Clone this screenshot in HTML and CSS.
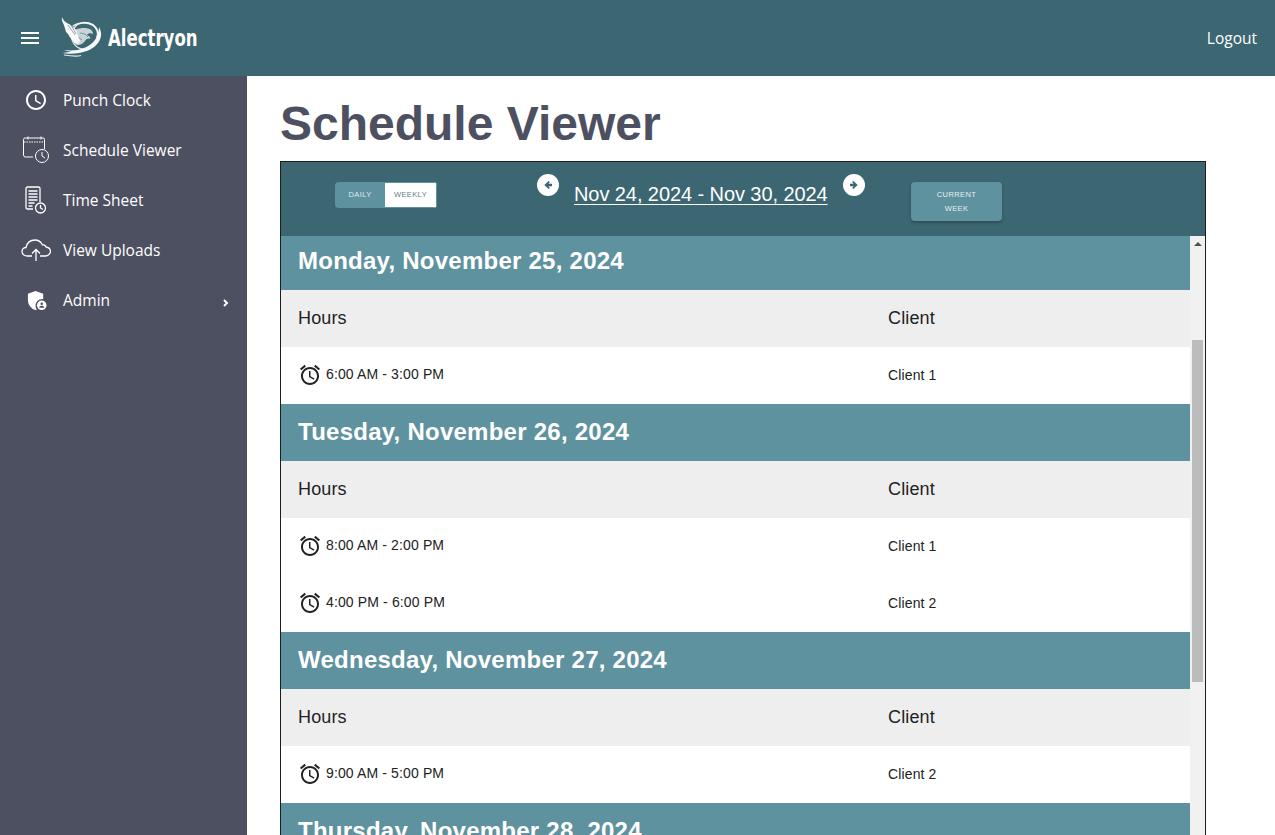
FILE: index.html
```html
<!DOCTYPE html>
<html lang="en">
<head>
<meta charset="utf-8">
<title>Schedule Viewer</title>
<link rel="stylesheet" href="styles.css">
</head>
<body>
<header class="topbar">
  <svg class="menu-icon" viewBox="0 0 24 24"><path d="M3 18h18v-2H3v2zm0-5h18v-2H3v2zm0-7v2h18V6H3z"/></svg>
  <div class="logo">
    <svg class="logo-mark" viewBox="0 0 44 42">
      <circle class="logo-line thin" cx="25" cy="19" r="13.500"/>
      <path class="logo-line" d="M13 9c6-4 14-4 20-1 4 3 6 8 4 13"/>
      <path class="logo-soft" d="M24 11c5 0 9 2 9 6-2-1-5-1-6 1 2 1 4 2 3 4-2-1-4 0-5 2-3 4-7 5-10 3-3-3-4-9-2-13 2-2 7-3 11-3z"/>
      <path class="logo-cut" d="M20 16l5 1 3 3M18 20l4 3"/>
      <path class="logo-fill" d="M2 0c1 3 3 5 5 6 4 2 7 4 9 7l2 6 2 5-2 3c-5-2-8-6-10-10l-2-2C4 6 1 4 2 0z"/>
      <path class="logo-cut" d="M8 8l7 10M11 8l5 9"/>
      <path class="logo-fill" d="M39 10c3 5 3 11-1 16-5 6-12 9-19 10-6 1-12 1-17 0 4-.5 7-1 9-1.500-3-.2-5-.8-7-1.500 7 1 14 .5 20-2 8-3 15-10 15-21z"/>
      <path class="logo-line thin" d="M4 38c6 1 12 2 17 .5"/>
    </svg>
    <span class="logo-text">Alectryon</span>
  </div>
  <a class="logout">Logout</a>
</header>
<div class="shell">
  <nav class="sidebar">
    <a class="nav-item">
      <span class="nav-icon"><svg width="24" height="24" viewBox="0 0 24 24"><path class="fill" d="M11.990 2C6.470 2 2 6.480 2 12s4.470 10 9.990 10C17.520 22 22 17.520 22 12S17.520 2 11.990 2zM12 20c-4.420 0-8-3.580-8-8s3.580-8 8-8 8 3.580 8 8-3.580 8-8 8zm.5-13H11v6l5.250 3.150.75-1.230-4.500-2.670z"/></svg></span>
      <span>Punch Clock</span>
    </a>
    <a class="nav-item">
      <span class="nav-icon"><svg width="28" height="28" viewBox="0 0 28 28"><g class="stroke"><path d="M11 21H3.500a2 2 0 0 1-2-2V3.500a1.500 1.500 0 0 1 1.500-1.500h18a1.500 1.500 0 0 1 1.500 1.500V13"/><path stroke-dasharray="1.500 1" d="M2 6h21"/><path d="M6 0.500v3M19 0.500v3"/><circle cx="20" cy="20" r="6.500"/><path d="M20 16v4l3 2"/></g></svg></span>
      <span>Schedule Viewer</span>
    </a>
    <a class="nav-item">
      <span class="nav-icon"><svg width="26" height="28" viewBox="0 0 26 28"><g class="stroke heavy"><path d="M10 23H4.500a1.500 1.500 0 0 1-1.500-1.500V2.500A1.500 1.500 0 0 1 4.500 1h11A1.500 1.500 0 0 1 17 2.500V16"/><path d="M5.500 5h9M5.500 8h9M5.500 11h9M5.500 14h9M5.500 17h6M5.500 20h4"/><circle cx="17.500" cy="22" r="5"/><path d="M17.500 19v3l2.500 1.500"/></g></svg></span>
      <span>Time Sheet</span>
    </a>
    <a class="nav-item">
      <span class="nav-icon"><svg width="30" height="22" viewBox="0 0 30 22"><g class="stroke heavy"><path d="M11 17H6.500C3.500 17 1 15 1 12.500S3 8.500 5 8.500C6 4 9.500 1 14 1c3.500 0 6 2 7.500 5 1-.5 3 0 3.500 2 2.500.5 4.500 2.500 4.500 4.500S27 17 24.500 17H19"/><path d="M15 22V11M11 14.500l4-4 4 4"/></g></svg></span>
      <span>View Uploads</span>
    </a>
    <a class="nav-item">
      <span class="nav-icon"><svg width="21" height="21" viewBox="0 0 22 22"><path class="fill" d="M10 1l8 3v5.500c-4.500-.5-8 3-8 7 0 1.500.5 3 1.500 4-.5.2-1 .4-1.500.5-4.500-1.200-8-5.500-8-10.500V4z"/><circle class="fill" cx="16.500" cy="16" r="5"/><circle class="cut" cx="16.500" cy="14.300" r="1.300"/><path class="cut" d="M13.800 18.500c.3-1.500 1.500-2 2.700-2s2.400.5 2.700 2z"/></svg></span>
      <span class="nav-label">Admin</span>
      <svg class="nav-chevron" viewBox="0 0 8 10"><path d="M2 2l3 3-3 3" /></svg>
    </a>
  </nav>
  <main class="content">
    <h1 class="page-title">Schedule Viewer</h1>
    <section class="card">
      <div class="toolbar">
        <div class="toggle">
          <span class="toggle-btn on">Daily</span>
          <span class="toggle-btn off">Weekly</span>
        </div>
        <svg class="round-arrow prev" viewBox="0 0 22 22"><circle class="disc" cx="11" cy="11" r="11"/><path class="arrow" d="M15 9.800h-3.600l1.500-1.700-1.300-1.200L7.300 11l4.300 4.100 1.300-1.200-1.500-1.700H15z"/></svg>
        <a class="range">Nov 24, 2024 - Nov 30, 2024</a>
        <svg class="round-arrow next" viewBox="0 0 22 22"><circle class="disc" cx="11" cy="11" r="11"/><path class="arrow" d="M7 12.200h3.600l-1.500 1.700 1.300 1.200 4.300-4.100-4.300-4.100-1.300 1.200 1.500 1.700H7z"/></svg>
        <button class="current-week">Current<br>Week</button>
      </div>
      <div class="scroller">
        <div class="days">
          <div class="day">
            <h2 class="day-title">Monday, November 25, 2024</h2>
            <div class="row head"><span>Hours</span><span>Client</span></div>
            <div class="row shift"><span class="time"><svg class="alarm" viewBox="0 0 24 24"><path d="M22 5.720l-4.600-3.860-1.290 1.530 4.600 3.860L22 5.720zM7.880 3.390L6.600 1.860 2 5.710l1.290 1.530 4.590-3.850zM12.500 8H11v6l4.750 2.850.75-1.230-4-2.370V8zM12 4c-4.970 0-9 4.030-9 9s4.030 9 9 9 9-4.030 9-9-4.030-9-9-9zm0 16c-3.870 0-7-3.130-7-7s3.130-7 7-7 7 3.130 7 7-3.130 7-7 7z"/></svg><span>6:00 AM - 3:00 PM</span></span><span class="client">Client 1</span></div>
          </div>
          <div class="day">
            <h2 class="day-title">Tuesday, November 26, 2024</h2>
            <div class="row head"><span>Hours</span><span>Client</span></div>
            <div class="row shift"><span class="time"><svg class="alarm" viewBox="0 0 24 24"><path d="M22 5.720l-4.600-3.860-1.290 1.530 4.600 3.860L22 5.720zM7.880 3.390L6.600 1.860 2 5.710l1.290 1.530 4.590-3.850zM12.500 8H11v6l4.750 2.850.75-1.230-4-2.370V8zM12 4c-4.970 0-9 4.030-9 9s4.030 9 9 9 9-4.030 9-9-4.030-9-9-9zm0 16c-3.870 0-7-3.130-7-7s3.130-7 7-7 7 3.130 7 7-3.130 7-7 7z"/></svg><span>8:00 AM - 2:00 PM</span></span><span class="client">Client 1</span></div>
            <div class="row shift"><span class="time"><svg class="alarm" viewBox="0 0 24 24"><path d="M22 5.720l-4.600-3.860-1.290 1.530 4.600 3.860L22 5.720zM7.880 3.390L6.600 1.860 2 5.710l1.290 1.530 4.590-3.850zM12.500 8H11v6l4.750 2.850.75-1.230-4-2.370V8zM12 4c-4.970 0-9 4.030-9 9s4.030 9 9 9 9-4.030 9-9-4.030-9-9-9zm0 16c-3.870 0-7-3.130-7-7s3.130-7 7-7 7 3.130 7 7-3.130 7-7 7z"/></svg><span>4:00 PM - 6:00 PM</span></span><span class="client">Client 2</span></div>
          </div>
          <div class="day">
            <h2 class="day-title">Wednesday, November 27, 2024</h2>
            <div class="row head"><span>Hours</span><span>Client</span></div>
            <div class="row shift"><span class="time"><svg class="alarm" viewBox="0 0 24 24"><path d="M22 5.720l-4.600-3.860-1.290 1.530 4.600 3.860L22 5.720zM7.880 3.390L6.600 1.860 2 5.710l1.290 1.530 4.590-3.850zM12.500 8H11v6l4.750 2.850.75-1.230-4-2.370V8zM12 4c-4.970 0-9 4.030-9 9s4.030 9 9 9 9-4.030 9-9-4.030-9-9-9zm0 16c-3.870 0-7-3.130-7-7s3.130-7 7-7 7 3.130 7 7-3.130 7-7 7z"/></svg><span>9:00 AM - 5:00 PM</span></span><span class="client">Client 2</span></div>
          </div>
          <div class="day">
            <h2 class="day-title">Thursday, November 28, 2024</h2>
          </div>
        </div>
        <div class="scrollbar">
          <span class="scroll-up"></span>
          <span class="scroll-thumb"></span>
        </div>
      </div>
    </section>
  </main>
</div>
</body>
</html>
```
FILE: styles.css
```css
* { box-sizing: border-box; }
html, body { height: 100%; }
body {
  margin: 0;
  overflow: hidden;
  display: flex;
  flex-direction: column;
  font-family: "Liberation Sans", Arial, sans-serif;
  background: #fff;
}
.topbar {
  flex: 0 0 76px;
  display: flex;
  align-items: center;
  padding: 0 18px;
  background: #3c6672;
  color: #fff;
}
.menu-icon { width: 24px; height: 24px; fill: #fff; }
.logo { display: flex; align-items: center; margin-left: 18px; }
.logo-mark { width: 44px; height: 42px; margin-top: -1px; }
.logo-fill { fill: #fff; opacity: .95; }
.logo-soft { fill: #fff; opacity: .72; }
.logo-cut { fill: none; stroke: #3c6672; stroke-width: .8; opacity: .7; }
.logo-line { fill: none; stroke: #fff; stroke-width: 2; opacity: .85; }
.logo-line.thin { stroke-width: 1.200; }
.logo-text {
  margin-left: 4px;
  font-family: "DejaVu Sans", sans-serif;
  font-size: 23px;
  font-weight: 700;
  display: inline-block;
  width: 90px;
  white-space: nowrap;
  transform: scaleX(.72);
  transform-origin: left center;
}
.logout {
  margin-left: auto;
  margin-top: -1px;
  font-family: "Open Sans", sans-serif;
  font-size: 15.500px;
}
.shell { flex: 1; display: flex; min-height: 0; }
.sidebar {
  flex: 0 0 247px;
  background: #4d5061;
  color: #fff;
}
.nav-item {
  display: flex;
  align-items: center;
  height: 50px;
  font-family: "Open Sans", sans-serif;
  font-size: 15.500px;
  position: relative;
  top: -1px;
}
.nav-icon {
  flex: 0 0 63px;
  padding-left: 9px;
  display: flex;
  justify-content: center;
  align-items: center;
}
.nav-icon .fill { fill: #fff; }
.nav-icon .cut { fill: #4d5061; }
.nav-icon .stroke { fill: none; stroke: #fff; stroke-width: 1; }
.nav-icon .stroke.heavy { stroke-width: 1.300; }
.nav-label { flex: 1; }
.nav-chevron {
  width: 8px;
  height: 10px;
  margin: 6px 17px 0 0;
  fill: none;
  stroke: #fff;
  stroke-width: 2;
}
.content { flex: 1; padding: 0 69px 0 33px; min-width: 0; }
.page-title {
  margin: 20px 0 9px;
  font-size: 48px;
  line-height: 56px;
  font-weight: 700;
  color: #4d5061;
}
.card {
  border: 1px solid #1d1d1d;
  border-bottom: 0;
  height: 700px;
  display: flex;
  flex-direction: column;
}
.toolbar {
  flex: 0 0 74px;
  display: flex;
  align-items: flex-start;
  padding: 12px 0 0 54px;
  background: #3c6672;
}
.toggle {
  display: flex;
  margin-top: 8px;
  width: 102px;
  height: 26px;
  border-radius: 4px;
  overflow: hidden;
  font-size: 7.500px;
  text-transform: uppercase;
  letter-spacing: .4px;
}
.toggle-btn { display: flex; align-items: center; justify-content: center; padding-bottom: 1px; }
.toggle-btn.on { width: 50px; background: #5f929f; color: #dfe9ec; }
.toggle-btn.off { width: 52px; background: #fff; color: #5f7f8a; border: 1px solid #5f929f; border-left: 0; }
.round-arrow { width: 22px; height: 22px; flex: none; }
.prev { margin-left: 100px; }
.next { margin-left: 15px; }
.disc { fill: #fff; }
.arrow { fill: #3c6672; }
.range {
  margin: 7px 0 0 15px;
  width: 254px;
  white-space: nowrap;
  color: #fff;
  font-size: 20px;
  line-height: 26px;
  letter-spacing: -.08px;
  text-decoration: underline;
  text-decoration-thickness: 1px;
  text-underline-offset: 3px;
}
.current-week {
  margin: 8px 0 0 46px;
  width: 91px;
  height: 39px;
  padding: 1px 0 0;
  border: 0;
  border-radius: 4px;
  background: #5f929f;
  color: #e6eef0;
  font: 7.500px/14px "Liberation Sans", Arial, sans-serif;
  letter-spacing: .4px;
  text-transform: uppercase;
  box-shadow: 0 2px 3px rgba(0,0,0,.25);
}
.scroller { flex: 1; display: flex; min-height: 0; overflow: hidden; }
.days { flex: 1; margin-top: -3px; min-width: 0; }
.day-title {
  margin: 0;
  height: 57px;
  padding: 0 0 2px 17px;
  display: flex;
  align-items: center;
  background: #5f929f;
  color: #fff;
  font-size: 24px;
  font-weight: 700;
  letter-spacing: .25px;
}
.row {
  display: grid;
  grid-template-columns: 590px 1fr;
  align-items: center;
  height: 57px;
  padding-left: 17px;
  color: #222;
}
.row.head { background: #eee; font-size: 18px; letter-spacing: .15px; }
.row.shift { background: #fff; font-size: 14px; letter-spacing: .13px; padding-bottom: 2px; }
.time { display: flex; align-items: center; gap: 4px; }
.time span { position: relative; top: -1px; }
.alarm { width: 24px; height: 24px; fill: #222; }
.scrollbar {
  flex: 0 0 15px;
  background: #f1f1f1;
  display: flex;
  flex-direction: column;
  align-items: center;
}
.scroll-up {
  margin-top: 6px;
  border-left: 4px solid transparent;
  border-right: 4px solid transparent;
  border-bottom: 4px solid #505050;
}
.scroll-thumb {
  margin-top: 94px;
  width: 11px;
  height: 342px;
  background: #bcbcbc;
}
```
